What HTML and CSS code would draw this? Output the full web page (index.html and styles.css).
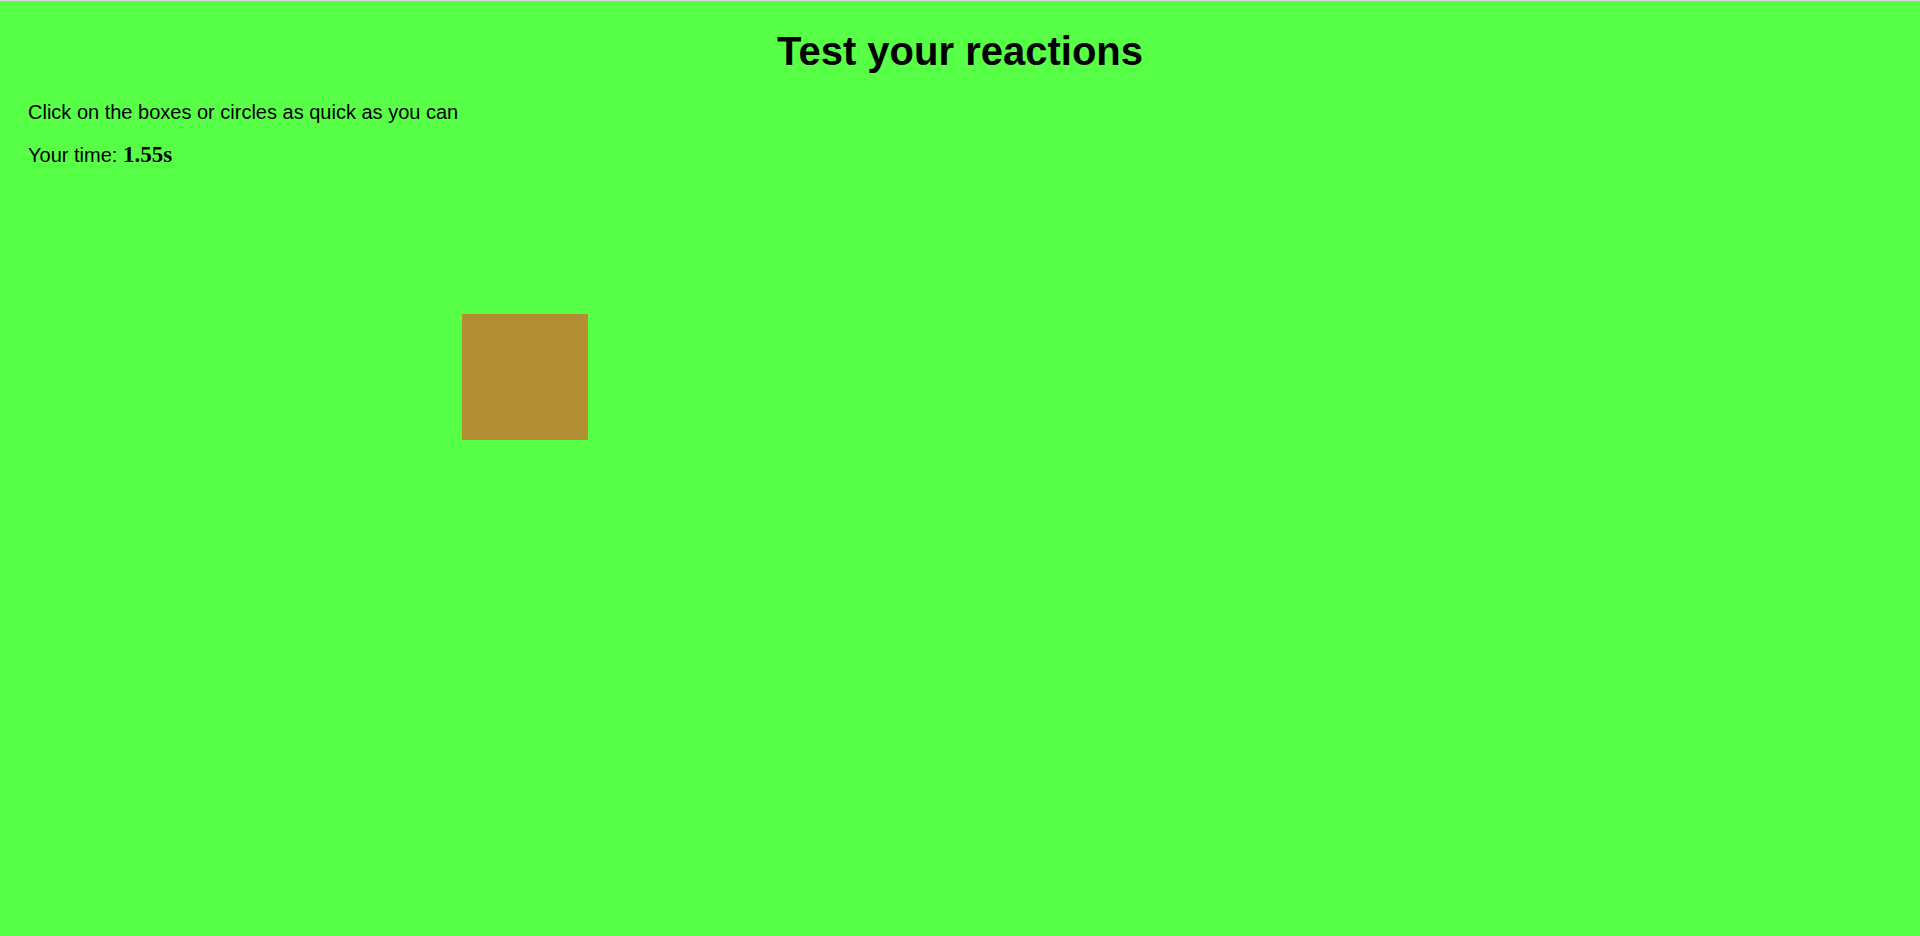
FILE: index.html
```html
<!DOCTYPE html>
<html lang="en">
<head>
<meta charset="utf-8">
<title>Test your reactions</title>
<link rel="stylesheet" href="styles.css">
</head>
<body>
<main class="page">
  <h1 class="title">Test your reactions</h1>
  <p class="intro">Click on the boxes or circles as quick as you can</p>
  <p class="result">Your time: <span class="time">1.55s</span></p>
  <div class="arena">
    <div class="target"></div>
  </div>
</main>
</body>
</html>
```
FILE: styles.css
```css
html, body {
  margin: 0;
  padding: 0;
  height: 100%;
}
body {
  background: #58ff47;
  border-top: 1px solid #d9d9d9;
  box-sizing: border-box;
  font-family: "Liberation Sans", Arial, sans-serif;
  color: #000;
}
.page {
  position: relative;
  height: 100%;
  padding: 0 28px;
  box-sizing: border-box;
}
.title {
  margin: 0;
  padding-top: 27px;
  font-size: 40px;
  line-height: 46px;
  font-weight: bold;
  text-align: center;
}
.intro {
  margin: 27px 0 0;
  font-size: 20px;
  line-height: 23px;
}
.result {
  margin: 19px 0 0;
  font-size: 20px;
  line-height: 23px;
}
.time {
  font-family: "Liberation Serif", "Times New Roman", serif;
  font-weight: bold;
  font-size: 23px;
}
.arena {
  position: absolute;
  inset: 0;
  pointer-events: none;
}
.target {
  position: absolute;
  left: 462px;
  top: 313px;
  width: 126px;
  height: 126px;
  background: #b28f33;
}
```
